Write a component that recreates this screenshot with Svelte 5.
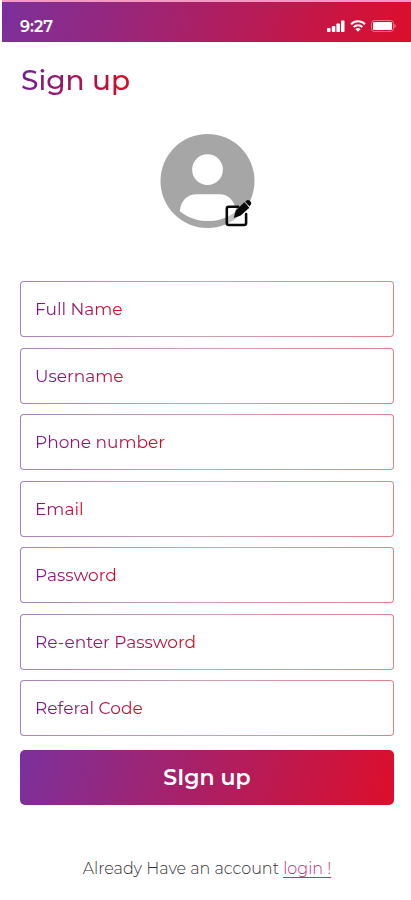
<script lang="ts">
	interface Field {
		id: string;
		label: string;
		type: string;
	}

	const fields: Field[] = [
		{ id: 'full-name', label: 'Full Name', type: 'text' },
		{ id: 'username', label: 'Username', type: 'text' },
		{ id: 'phone', label: 'Phone number', type: 'tel' },
		{ id: 'email', label: 'Email', type: 'email' },
		{ id: 'password', label: 'Password', type: 'password' },
		{ id: 'password-repeat', label: 'Re-enter Password', type: 'password' },
		{ id: 'referral', label: 'Referal Code', type: 'text' }
	];

	let values = $state<Record<string, string>>({});

	function submit(event: SubmitEvent) {
		event.preventDefault();
	}
</script>

<div class="screen">
	<header class="status-bar">
		<span class="time">9:27</span>
		<div class="indicators">
			<svg width="18" height="12" viewBox="0 0 18 12" aria-hidden="true">
				<rect x="0" y="8" width="3.500" height="4" rx="0.8" />
				<rect x="4.800" y="6" width="3.500" height="6" rx="0.8" />
				<rect x="9.400" y="3.500" width="3.500" height="8.500" rx="0.8" />
				<rect x="14" y="0.500" width="3.500" height="11.500" rx="0.8" />
			</svg>
			<svg width="16" height="12" viewBox="0 0 16 12" aria-hidden="true">
				<path class="wave" d="M1 4.200a10 10 0 0 1 14 0M3.600 7a6.300 6.300 0 0 1 8.800 0" />
				<path d="M8 11.800 5.400 9.200a3.700 3.700 0 0 1 5.200 0z" />
			</svg>
			<svg width="25" height="12" viewBox="0 0 25 12" aria-hidden="true">
				<rect class="shell" x="0.5" y="0.5" width="22" height="11" rx="3" />
				<rect x="2" y="2" width="19" height="8" rx="1" />
				<path class="tip" d="M23.500 4v4c1.600-.6 1.600-3.400 0-4z" />
			</svg>
		</div>
	</header>

	<main>
		<h1 class="gradient-text">Sign up</h1>

		<button class="avatar" type="button" aria-label="Change profile picture">
			<svg width="95" height="95" viewBox="0 0 96 96" aria-hidden="true">
				<circle cx="48" cy="47.500" r="47.500" fill="#a6a6a6" />
				<circle cx="48" cy="36" r="15.500" fill="#fff" />
				<path
					d="M20 78c1-11 8-17 17-17h23c9 0 15 6 17 17-8 6.500-18 10-28.500 10S28 84.500 20 78z"
					fill="#fff"
				/>
				<path d="M67 75h19v17H67z" fill="#fff" opacity="0.35" />
				<path
					d="M79 73.500H69.500q-2 0-2 2V90q0 2 2 2H85q2 0 2-2V81"
					fill="none"
					stroke="#0a0a0a"
					stroke-width="2.600"
					stroke-linecap="round"
				/>
				<path d="m74.500 85 2-7.700 8.700-8.300 5.100 5.400-8.700 8z" fill="#0a0a0a" />
				<path d="m86.200 68.200 1.600-1.200q1.600-1 3 .5l1 1.200q1.200 1.600-.2 2.900l-1.200 1.700z" fill="#0a0a0a" />
			</svg>
		</button>

		<form onsubmit={submit}>
			<div class="fields">
				{#each fields as field (field.id)}
					<div class="field">
						<input id={field.id} type={field.type} placeholder=" " bind:value={values[field.id]} />
						<label class="gradient-text" for={field.id}>{field.label}</label>
					</div>
				{/each}
			</div>
			<button class="submit" type="submit">SIgn up</button>
		</form>

		<p class="login">Already Have an account <a href="#login">login !</a></p>
	</main>
</div>

<style>
	:global(body) {
		margin: 0;
		background: #fff;
	}

	.screen {
		--brand: linear-gradient(105deg, #7b309c 0%, #dd0e2b 100%);
		display: flex;
		flex-direction: column;
		min-height: 100vh;
		font-family: Montserrat, Inter, sans-serif;
	}

	.status-bar {
		display: flex;
		align-items: center;
		justify-content: space-between;
		height: 42px;
		margin-left: 2px;
		padding: 8px 15px 0 18px;
		box-sizing: border-box;
		border-top: 2px solid #f59ac4;
		background: var(--brand);
		color: #fff;
	}

	.time {
		font-size: 16px;
		font-weight: 600;
	}

	.indicators {
		display: flex;
		align-items: center;
		gap: 5px;
	}

	.indicators svg {
		fill: #fff;
	}

	.indicators .wave {
		fill: none;
		stroke: #fff;
		stroke-width: 2;
	}

	.indicators .shell {
		fill: none;
		stroke: #fff;
		opacity: 0.4;
	}

	.indicators .tip {
		opacity: 0.5;
	}

	main {
		display: flex;
		flex-direction: column;
		flex: 1;
		padding: 18px 17px 20px 20px;
	}

	.gradient-text {
		width: fit-content;
		background: linear-gradient(100deg, #6f1f96 0%, #dc0a1e 100%);
		-webkit-background-clip: text;
		background-clip: text;
		color: transparent;
	}

	h1 {
		margin: 0 0 34px 1px;
		font-size: 28px;
		font-weight: 500;
		line-height: 40px;
	}

	.avatar {
		align-self: center;
		padding: 0;
		border: none;
		background: none;
		cursor: pointer;
	}

	.avatar svg {
		display: block;
	}

	form {
		display: flex;
		flex-direction: column;
		flex: 1;
		gap: 14px;
		margin-top: 52px;
	}

	/* Rows share out whatever height the window leaves */
	.fields {
		display: flex;
		flex-direction: column;
		flex: 1;
		justify-content: space-between;
		gap: 8px;
	}

	.field {
		display: grid;
		align-items: center;
	}

	.field input,
	.field label {
		grid-area: 1 / 1;
	}

	.field input {
		width: 100%;
		height: 56px;
		padding: 0 15px;
		box-sizing: border-box;
		border: 1px solid transparent;
		border-radius: 4px;
		background:
			linear-gradient(#fff, #fff) padding-box,
			linear-gradient(100deg, #a483bb 0%, #cfa3b0 50%, #e0808c 100%) border-box;
		color: #6f1f96;
		font: inherit;
		font-size: 17px;
	}

	.field label {
		margin-left: 15px;
		font-size: 17px;
		line-height: 24px;
		pointer-events: none;
	}

	.field input:not(:placeholder-shown) + label {
		visibility: hidden;
	}

	.submit {
		height: 55px;
		border: none;
		border-radius: 5px;
		background: var(--brand);
		color: #fff;
		font: inherit;
		font-size: 22px;
		font-weight: 600;
		cursor: pointer;
	}

	.login {
		margin: 53px 0 0;
		color: #333;
		font-size: 16px;
		font-weight: 300;
		line-height: 22px;
		text-align: center;
	}

	.login a {
		color: #b8327c;
		text-underline-offset: 3px;
	}
</style>
